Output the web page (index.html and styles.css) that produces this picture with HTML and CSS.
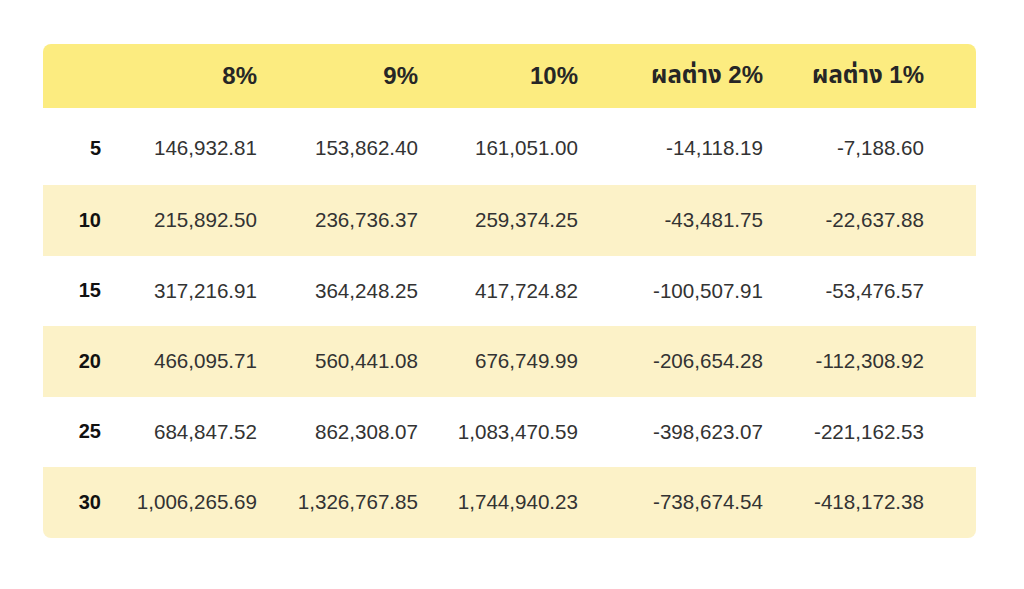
FILE: index.html
```html
<!DOCTYPE html>
<html lang="th">
<head>
<meta charset="utf-8">
<title>ตารางเปรียบเทียบผลตอบแทน</title>
<link rel="stylesheet" href="styles.css">
</head>
<body>
<div class="wrap">
<table class="rates">
  <colgroup>
    <col class="c-year">
    <col class="c-8">
    <col class="c-9">
    <col class="c-10">
    <col class="c-d2">
    <col class="c-d1">
    <col class="c-pad">
  </colgroup>
  <thead>
    <tr>
      <th></th>
      <th>8%</th>
      <th>9%</th>
      <th>10%</th>
      <th>ผลต่าง 2%</th>
      <th>ผลต่าง 1%</th>
      <th></th>
    </tr>
  </thead>
  <tbody>
    <tr class="first">
      <th>5</th><td>146,932.81</td><td>153,862.40</td><td>161,051.00</td><td>-14,118.19</td><td>-7,188.60</td><td></td>
    </tr>
    <tr class="alt">
      <th>10</th><td>215,892.50</td><td>236,736.37</td><td>259,374.25</td><td>-43,481.75</td><td>-22,637.88</td><td></td>
    </tr>
    <tr>
      <th>15</th><td>317,216.91</td><td>364,248.25</td><td>417,724.82</td><td>-100,507.91</td><td>-53,476.57</td><td></td>
    </tr>
    <tr class="alt">
      <th>20</th><td>466,095.71</td><td>560,441.08</td><td>676,749.99</td><td>-206,654.28</td><td>-112,308.92</td><td></td>
    </tr>
    <tr>
      <th>25</th><td>684,847.52</td><td>862,308.07</td><td>1,083,470.59</td><td>-398,623.07</td><td>-221,162.53</td><td></td>
    </tr>
    <tr class="alt last">
      <th>30</th><td>1,006,265.69</td><td>1,326,767.85</td><td>1,744,940.23</td><td>-738,674.54</td><td>-418,172.38</td><td></td>
    </tr>
  </tbody>
</table>
</div>
</body>
</html>
```

FILE: styles.css
```css
html, body {
  margin: 0;
  padding: 0;
  background: #ffffff;
}

body {
  font-family: "Liberation Sans", Arial, "Noto Sans Thai", "Noto Sans", sans-serif;
  color: #222222;
}

.wrap {
  padding: 44px 0 0 43px;
}

.rates {
  width: 933px;
  border-collapse: separate;
  border-spacing: 0;
  table-layout: fixed;
}

.c-year { width: 58px; }
.c-8 { width: 156px; }
.c-9 { width: 161px; }
.c-10 { width: 160px; }
.c-d2 { width: 185px; }
.c-d1 { width: 161px; }
.c-pad { width: 52px; }

.rates th,
.rates td {
  padding: 0;
  text-align: right;
  white-space: nowrap;
  vertical-align: middle;
}

.rates thead th {
  height: 64px;
  background: #fcec80;
  font-size: 24px;
  font-weight: 700;
  color: #262626;
  padding-top: 0;
}

.rates thead th:first-child { border-top-left-radius: 8px; }
.rates thead th:last-child { border-top-right-radius: 8px; }

.rates tbody tr { height: 70.5px; }
.rates tbody tr.first { height: 77px; }
.rates tbody tr.first th,
.rates tbody tr.first td { padding-top: 3px; }

.rates tbody th {
  font-size: 20px;
  font-weight: 700;
  color: #111111;
}

.rates tbody td {
  font-size: 20.6px;
  font-weight: 400;
  color: #333333;
}

.rates tbody tr.alt th,
.rates tbody tr.alt td {
  background: #fcf2c8;
}

.rates tbody tr.last th:first-child { border-bottom-left-radius: 8px; }
.rates tbody tr.last td:last-child { border-bottom-right-radius: 8px; }
```
